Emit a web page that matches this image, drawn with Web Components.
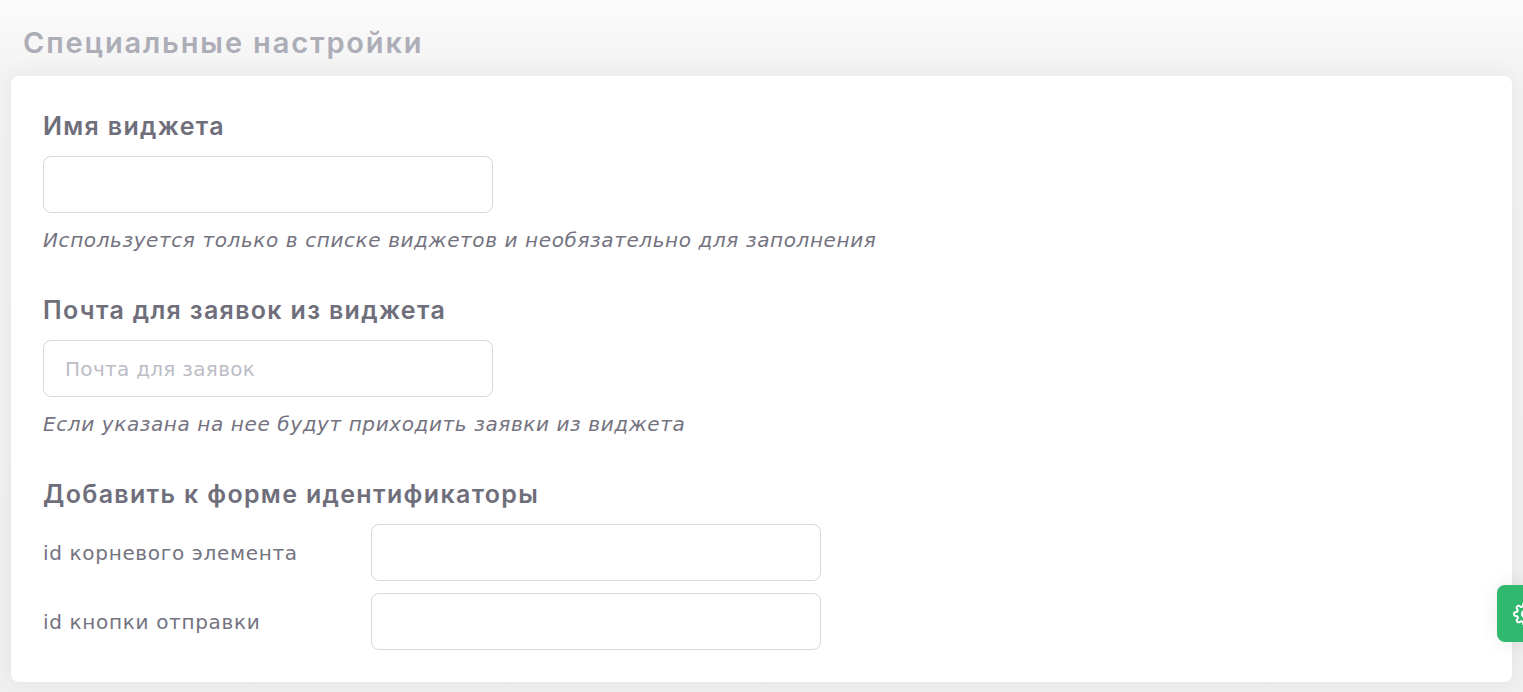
<!DOCTYPE html>
<html lang="ru"><head><meta charset="utf-8"><title>Специальные настройки</title>
<style>
html,body{margin:0;height:692px;overflow:hidden}
body{font-family:Inter,"Open Sans",sans-serif;background:linear-gradient(#fbfbfb 0,#f3f3f3 76px,#f0f0f0 100%)}
</style></head><body>
<template id="t-page"><style>
:host{display:block;padding:24px 11px 0}
h1{margin:0 0 14px 12px;font:600 29px/38px Inter,sans-serif;letter-spacing:1.85px;color:#adadb8}
.card{background:#fff;border-radius:8px;height:606px;box-sizing:border-box;padding:32px;box-shadow:0 0 24px rgba(0,0,0,.06);display:flex;flex-direction:column}
</style><h1><slot name="title"></slot></h1><div class="card"><slot></slot></div></template>
<template id="t-field"><style>
:host{display:block;margin-bottom:38px}
.l{font:600 25px/36px Inter,sans-serif;letter-spacing:1.33px;color:#6f6e7b;margin-bottom:12px;height:36px}
.h{font:oblique 400 20px/28px "DejaVu Sans",sans-serif;letter-spacing:.6px;color:#74737f;margin-top:13px;white-space:nowrap}
</style><div class="l"><slot name="label"></slot></div><slot></slot><div class="h"><slot name="hint"></slot></div></template>
<template id="t-input"><style>
:host{display:block;width:450px;height:57px}
input{box-sizing:border-box;width:100%;height:100%;border:1px solid #d9d7e3;border-radius:8px;background:#fff;padding:0 21px;font:400 20px "DejaVu Sans",sans-serif;letter-spacing:.3px;outline:none}
input::placeholder{color:#bdbcc6;opacity:1}
</style><input></template>
<template id="t-row"><style>
:host{display:flex;align-items:center;margin-bottom:12px}
.k{width:328px;font:400 20px/28px "DejaVu Sans",sans-serif;letter-spacing:.67px;color:#74737f}
</style><div class="k"><slot name="key"></slot></div><slot></slot></template>
<template id="t-tab"><style>
:host{position:fixed;left:1497px;top:585px;width:60px;height:57px;background:#30b86e;border-radius:8px;display:flex;align-items:center;padding-left:16px;box-sizing:border-box;box-shadow:0 0 20px rgba(0,0,0,.08)}
svg{width:24px;height:24px;fill:none;stroke:#fff;stroke-width:2;stroke-linecap:round;stroke-linejoin:round;flex:none}
</style><svg viewBox="0 0 24 24"><circle cx="12" cy="12" r="3"/><path d="M19.4 15a1.65 1.65 0 0 0 .33 1.82l.06.06a2 2 0 1 1-2.83 2.83l-.06-.06a1.65 1.65 0 0 0-2.82 1.17V21a2 2 0 0 1-4 0v-.09A1.65 1.65 0 0 0 7.27 19.7l-.06.06a2 2 0 1 1-2.83-2.83l.06-.06A1.65 1.65 0 0 0 3.27 14H3a2 2 0 0 1 0-4h.09A1.65 1.65 0 0 0 4.3 7.27l-.06-.06a2 2 0 1 1 2.83-2.83l.06.06A1.65 1.65 0 0 0 10 3.27V3a2 2 0 0 1 4 0v.09a1.65 1.65 0 0 0 2.82 1.17l.06-.06a2 2 0 1 1 2.83 2.83l-.06.06A1.65 1.65 0 0 0 20.91 10H21a2 2 0 0 1 0 4h-.09a1.65 1.65 0 0 0-1.51 1z"/></svg></template>
<settings-page>
<span slot="title">Специальные настройки</span>
<form-field><span slot="label">Имя виджета</span><text-box></text-box><span slot="hint">Используется только в списке виджетов и необязательно для заполнения</span></form-field>
<form-field><span slot="label">Почта для заявок из виджета</span><text-box placeholder="Почта для заявок"></text-box><span slot="hint">Если указана на нее будут приходить заявки из виджета</span></form-field>
<form-field style="margin:0"><span slot="label">Добавить к форме идентификаторы</span>
<id-row><span slot="key">id корневого элемента</span><text-box></text-box></id-row>
<id-row><span slot="key">id кнопки отправки</span><text-box></text-box></id-row>
</form-field>
</settings-page>
<side-tab></side-tab>
<script>
class Base extends HTMLElement{
  constructor(){super();this.attachShadow({mode:'open'}).appendChild(document.getElementById(this.constructor.tpl).content.cloneNode(true));}
}
const def=(n,t,extra)=>{const C=class extends Base{static tpl=t;connectedCallback(){extra&&extra(this)}};customElements.define(n,C)};
def('settings-page','t-page');
def('form-field','t-field');
def('id-row','t-row');
def('side-tab','t-tab');
def('text-box','t-input',el=>{const p=el.getAttribute('placeholder');if(p)el.shadowRoot.querySelector('input').placeholder=p;});
</script>
</body></html>
